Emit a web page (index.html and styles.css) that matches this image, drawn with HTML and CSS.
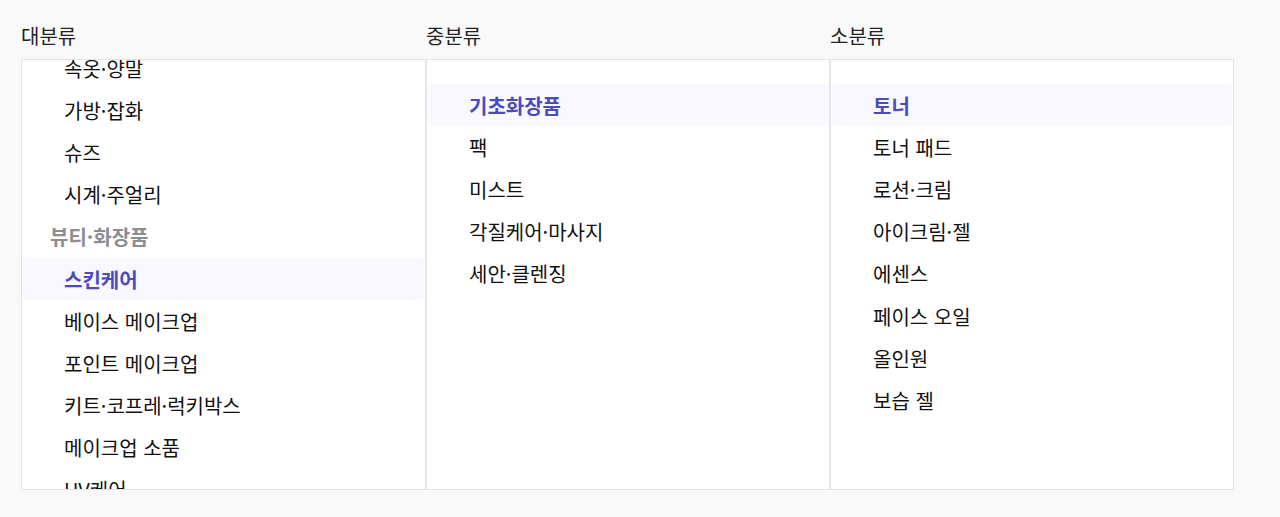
FILE: index.html
```html
<!DOCTYPE html>
<html lang="ko">
<head>
<meta charset="utf-8">
<title>카테고리</title>
<link rel="stylesheet" href="styles.css">
</head>
<body>
<div class="picker">
  <section class="col">
    <h2 class="col-title">대분류</h2>
    <div class="box">
      <ul class="list scrolled">
        <li class="item">속옷·양말</li>
        <li class="item">가방·잡화</li>
        <li class="item">슈즈</li>
        <li class="item">시계·주얼리</li>
        <li class="group">뷰티·화장품</li>
        <li class="item active">스킨케어</li>
        <li class="item">베이스 메이크업</li>
        <li class="item">포인트 메이크업</li>
        <li class="item">키트·코프레·럭키박스</li>
        <li class="item">메이크업 소품</li>
        <li class="item">UV케어</li>
        <li class="item">클렌징</li>
      </ul>
    </div>
  </section>
  <section class="col">
    <h2 class="col-title">중분류</h2>
    <div class="box">
      <ul class="list padded">
        <li class="item active">기초화장품</li>
        <li class="item">팩</li>
        <li class="item">미스트</li>
        <li class="item">각질케어·마사지</li>
        <li class="item">세안·클렌징</li>
      </ul>
    </div>
  </section>
  <section class="col">
    <h2 class="col-title">소분류</h2>
    <div class="box">
      <ul class="list padded">
        <li class="item active">토너</li>
        <li class="item">토너 패드</li>
        <li class="item">로션·크림</li>
        <li class="item">아이크림·젤</li>
        <li class="item">에센스</li>
        <li class="item">페이스 오일</li>
        <li class="item">올인원</li>
        <li class="item">보습 젤</li>
      </ul>
    </div>
  </section>
</div>
</body>
</html>
```

FILE: styles.css
```css
* { box-sizing: border-box; }
html, body {
  margin: 0;
  padding: 0;
  background: #f9f9f9;
  font-family: "Noto Sans CJK KR", "Noto Sans", sans-serif;
  color: #111;
}
.picker {
  display: grid;
  grid-template-columns: 405px 404px 404px;
  width: 1234px;
  padding: 22px 0 0 21px;
}
.col {
  display: flex;
  flex-direction: column;
  gap: 9px;
  min-width: 0;
}
.col-title {
  margin: 0;
  font-size: 20px;
  line-height: 28px;
  font-weight: 400;
  color: #222;
}
.box {
  height: 431px;
  background: #fff;
  border: 1px solid #e3e3e8;
  overflow: hidden;
}
.list {
  list-style: none;
  margin: 0;
  padding: 0 1px;
}
.list.padded {
  padding-top: 24px;
}
.list.scrolled {
  margin-top: -13px;
}
.item, .group {
  height: 42.2px;
  display: flex;
  align-items: center;
  font-size: 20px;
  white-space: nowrap;
}
.item {
  padding-left: 41px;
  color: #111;
  border-radius: 4px;
}
.group {
  padding-left: 27px;
  font-weight: 700;
  color: #8c8c93;
}
.item.active {
  background: #f8f8fe;
  color: #4b4bb9;
  font-weight: 700;
}
```
